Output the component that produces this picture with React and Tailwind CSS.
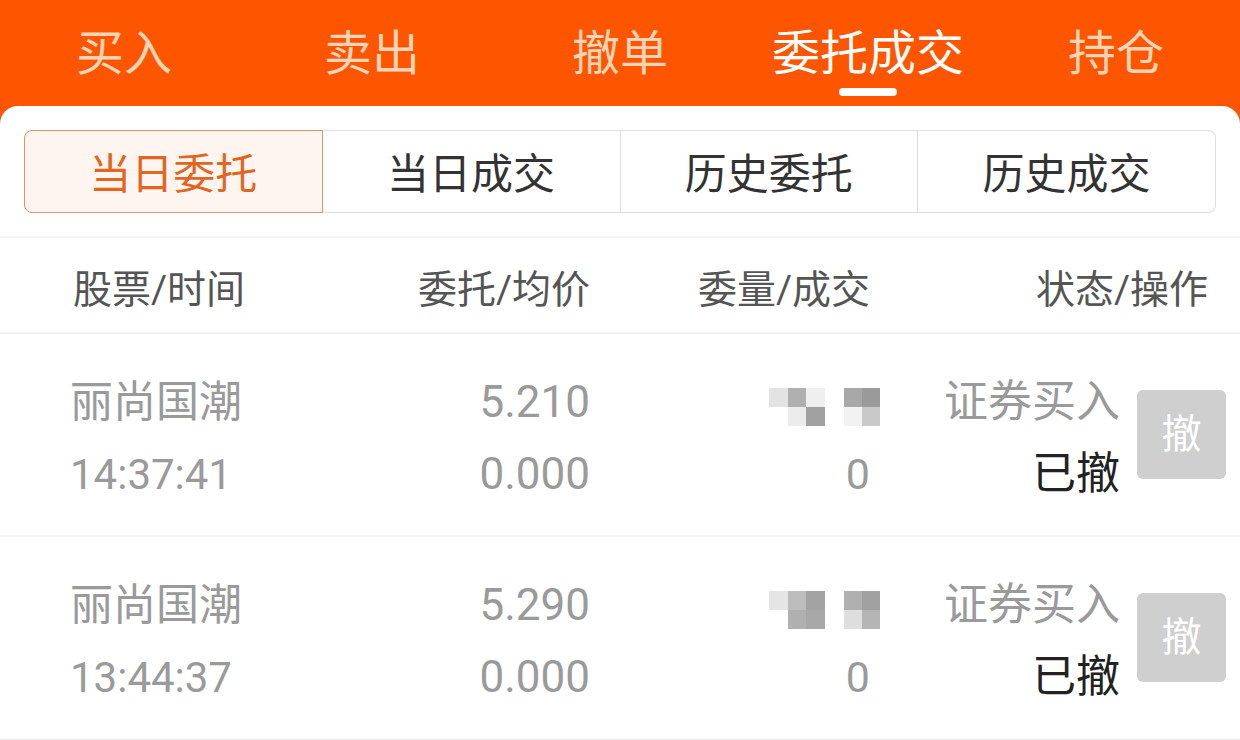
const TABS = ["买入", "卖出", "撤单", "委托成交", "持仓"];
const SEGMENTS = ["当日委托", "当日成交", "历史委托", "历史成交"];

const ORDERS = [
  {
    name: "丽尚国潮",
    time: "14:37:41",
    price: "5.210",
    avg: "0.000",
    deal: "0",
    type: "证券买入",
    status: "已撤",
    mosaic: [
      ["bg-[#e3e3e3]", "bg-[#b0b0b0]", "bg-[#efefef]", "bg-[#a8a8a8]", "bg-[#9a9a9a]"],
      ["bg-white", "bg-[#ececec]", "bg-[#a0a0a0]", "bg-[#f2f2f2]", "bg-[#c8c8c8]"],
    ],
  },
  {
    name: "丽尚国潮",
    time: "13:44:37",
    price: "5.290",
    avg: "0.000",
    deal: "0",
    type: "证券买入",
    status: "已撤",
    mosaic: [
      ["bg-[#e5e5e5]", "bg-[#bdbdbd]", "bg-[#a3a3a3]", "bg-[#b0b0b0]", "bg-[#a0a0a0]"],
      ["bg-white", "bg-[#b0b0b0]", "bg-[#a8a8a8]", "bg-[#dedede]", "bg-[#b5b5b5]"],
    ],
  },
];

// blurred-out quantity, kept as blocks like the screenshot
const Mosaic = ({ cells }) => (
  <div className="inline-flex flex-col blur-[0.6px] mr-[-10px]">
    {cells.map((row, r) => (
      <div key={r} className="flex">
        <div className={`w-[19px] h-[19px] ${row[0]}`} />
        <div className={`w-[18px] h-[19px] ${row[1]}`} />
        <div className={`w-[19px] h-[19px] ${row[2]}`} />
        <div className="w-[19px] h-[19px]" />
        <div className={`w-[18px] h-[19px] ${row[3]}`} />
        <div className={`w-[18px] h-[19px] ${row[4]}`} />
      </div>
    ))}
  </div>
);

const OrderRow = ({ order }) => (
  <div className="h-[203px] flex items-center pl-[70px] pt-[7px] border-b-2 border-[#f2f2f2] text-[42px] text-[#9a9a9a]">
    <div className="w-[230px] flex flex-col">
      <div className="h-[72px] flex items-center text-[43px]">{order.name}</div>
      <div className="h-[72px] flex items-center">{order.time}</div>
    </div>
    <div className="w-[290px] flex flex-col items-end text-[44px]">
      <div className="h-[72px] flex items-center">{order.price}</div>
      <div className="h-[72px] flex items-center">{order.avg}</div>
    </div>
    <div className="w-[280px] flex flex-col items-end text-[43px]">
      <div className="h-[72px] flex items-center pt-[10px]">
        <Mosaic cells={order.mosaic} />
      </div>
      <div className="h-[72px] flex items-center">{order.deal}</div>
    </div>
    <div className="w-[250px] flex flex-col items-end text-[44px]">
      <div className="h-[72px] flex items-center">{order.type}</div>
      <div className="h-[72px] flex items-center text-[#222]">{order.status}</div>
    </div>
    <button className="ml-[17px] mb-[7px] w-[89px] h-[89px] rounded-[6px] bg-[#cfcfcf] text-white text-[40px] flex items-center justify-center">
      撤
    </button>
  </div>
);

export default function App() {
  return (
    <div className="w-[1240px] h-[740px] overflow-hidden bg-[#fe5500] font-['Roboto','Noto_Sans_CJK_SC',sans-serif]">
      <div className="h-[106px] grid grid-cols-5">
        {TABS.map((t, i) => (
          <div key={t} className="flex flex-col items-center pt-[24px]">
            <div className={`text-[48px] leading-[60px] ${i === 3 ? "text-white" : "text-[#fdd4b6]"}`}>{t}</div>
            {i === 3 && <div className="mt-[4px] w-[58px] h-[8px] rounded-full bg-white" />}
          </div>
        ))}
      </div>
      <div className="bg-white rounded-t-[18px] h-[634px]">
        <div className="pt-[24px] px-[24px] pb-[23px] border-b-2 border-[#f4f4f4]">
          <div className="flex h-[83px]">
            {SEGMENTS.map((s, i) => (
              <div
                key={s}
                className={`flex-1 flex items-center justify-center pt-[6px] text-[42px] border-y border-r ${
                  i === 0
                    ? "border-l border-[#dc946a] bg-[#fff5f0] text-[#e2661f] rounded-l-[8px]"
                    : "border-[#dedede] text-[#333]"
                } ${i === 3 ? "rounded-r-[8px]" : ""}`}
              >
                {s}
              </div>
            ))}
          </div>
        </div>
        <div className="h-[96px] flex items-center pl-[73px] pt-[10px] border-b-2 border-[#f2f2f2] text-[39px] text-[#555]">
          <div className="w-[227px]">股票/时间</div>
          <div className="w-[290px] text-right">委托/均价</div>
          <div className="w-[280px] text-right">委量/成交</div>
          <div className="w-[338px] text-right">状态/操作</div>
        </div>
        {ORDERS.map((o) => (
          <OrderRow key={o.time} order={o} />
        ))}
      </div>
    </div>
  );
}
